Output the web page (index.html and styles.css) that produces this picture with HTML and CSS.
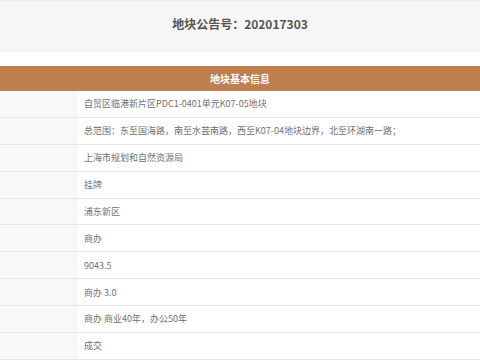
FILE: index.html
```html
<!DOCTYPE html>
<html lang="zh-CN">
<head>
<meta charset="utf-8">
<link rel="stylesheet" href="styles.css">
</head>
<body>
<div class="page">
  <header class="notice">地块公告号：202017303</header>
  <section class="info">
    <div class="info-head">地块基本信息</div>
    <div class="row"><div class="label"></div><div class="value">自贸区临港新片区PDC1-0401单元K07-05地块</div></div>
    <div class="row"><div class="label"></div><div class="value">总范围：东至国海路，南至水芸南路，西至K07-04地块边界，北至环湖南一路；</div></div>
    <div class="row"><div class="label"></div><div class="value">上海市规划和自然资源局</div></div>
    <div class="row"><div class="label"></div><div class="value">挂牌</div></div>
    <div class="row"><div class="label"></div><div class="value">浦东新区</div></div>
    <div class="row"><div class="label"></div><div class="value">商办</div></div>
    <div class="row"><div class="label"></div><div class="value">9043.5</div></div>
    <div class="row"><div class="label"></div><div class="value">商办 3.0</div></div>
    <div class="row"><div class="label"></div><div class="value">商办 商业40年，办公50年</div></div>
    <div class="row"><div class="label"></div><div class="value">成交</div></div>
  </section>
</div>
</body>
</html>
```
FILE: styles.css
```css
html, body {
  margin: 0;
  padding: 0;
  background: #ffffff;
}
body {
  font-family: "Noto Sans CJK SC", "Noto Sans", sans-serif;
  width: 480px;
  height: 360px;
  overflow: hidden;
}
.page {
  display: flex;
  flex-direction: column;
}
.notice {
  height: 51px;
  border-top: 1px solid #ececee;
  background: #f6f6f8;
  color: #555555;
  font-size: 12px;
  font-weight: bold;
  display: flex;
  align-items: center;
  justify-content: center;
  padding-bottom: 6px;
  box-sizing: border-box;
  height: 52px;
}
.info {
  margin-top: 14px;
  display: flex;
  flex-direction: column;
}
.info-head {
  height: 25px;
  background: #bf7f4f;
  color: #ffffff;
  font-size: 10px;
  font-weight: bold;
  display: flex;
  align-items: center;
  justify-content: center;
}
.row {
  display: flex;
  height: 26.875px;
  box-sizing: border-box;
  border-bottom: 1px solid #e6e6e6;
  flex-shrink: 0;
}
.label {
  width: 78px;
  background: #f8f8f9;
  flex-shrink: 0;
}
.value {
  flex: 1;
  padding-left: 6px;
  display: flex;
  align-items: center;
  font-size: 9px;
  color: #707070;
  white-space: nowrap;
}
```
